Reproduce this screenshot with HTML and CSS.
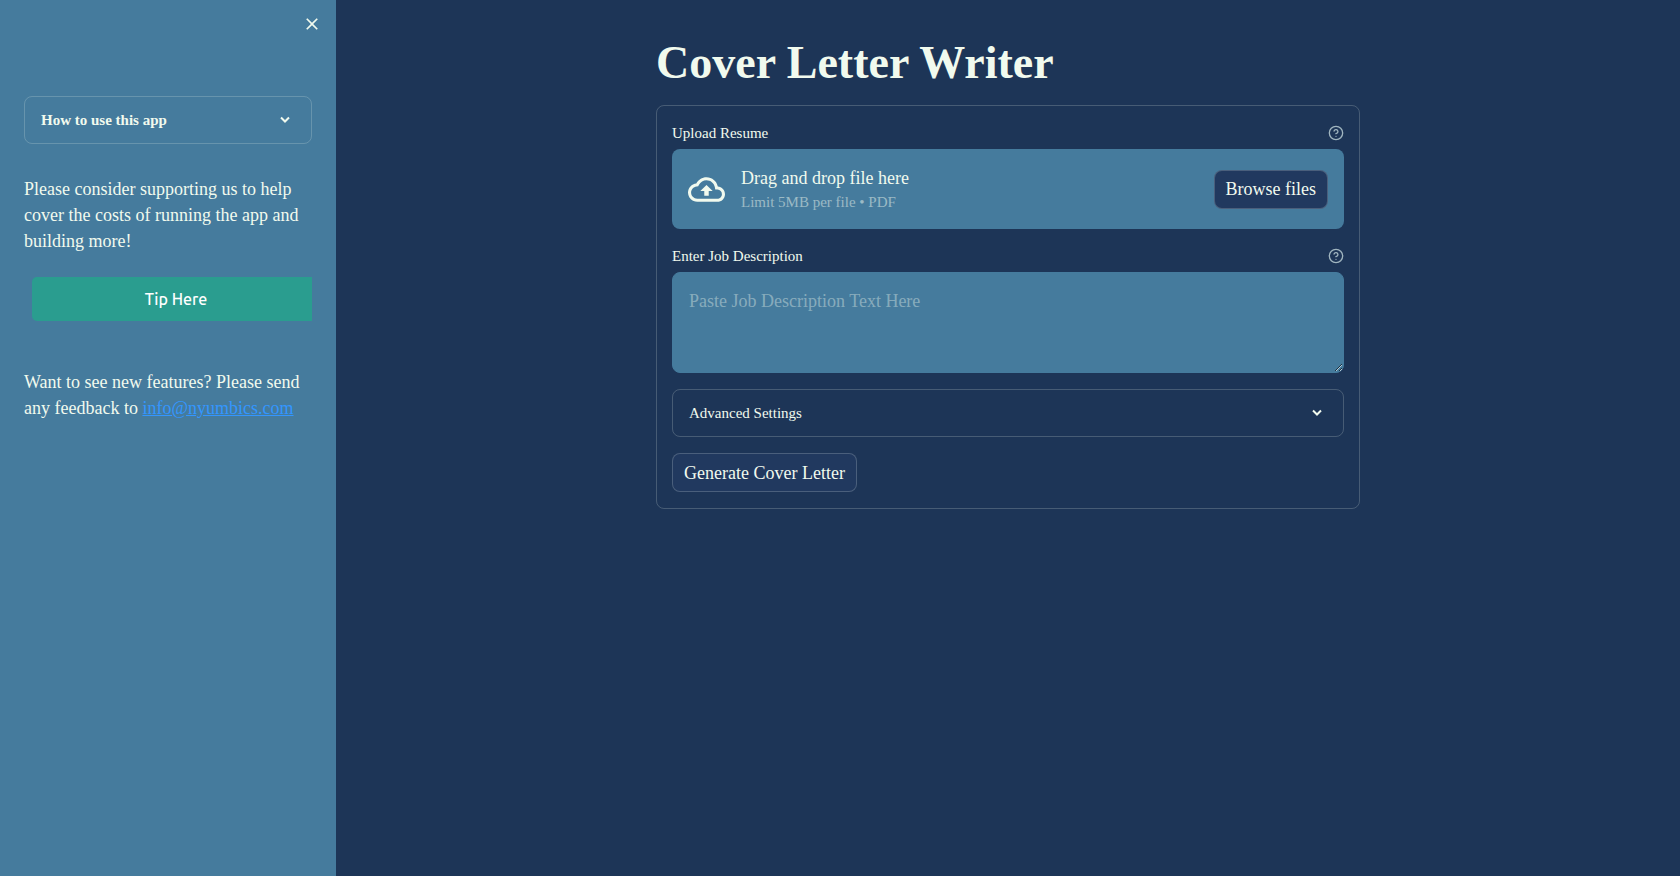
FILE: index.html
```html
<!DOCTYPE html>
<html lang="en">
<head>
    <meta charset="UTF-8">
    <meta name="viewport" content="width=device-width, initial-scale=1.0">
    <title>Cover Letter Writer</title>
    <link rel="stylesheet" href="styles.css">
</head>
<body>
    <aside class="sidebar">
        <div class="sidebar-top">
            <button class="close" type="button" aria-label="Close sidebar">
                <svg viewBox="0 0 24 24" width="20" height="20"><path d="M19 6.41L17.59 5 12 10.59 6.41 5 5 6.41 10.59 12 5 17.59 6.41 19 12 13.41 17.59 19 19 17.59 13.41 12z"/></svg>
            </button>
        </div>
        <details class="expander expander-bold">
            <summary>
                <span>How to use this app</span>
                <svg class="chevron" viewBox="0 0 12 12" width="12" height="12"><path d="M2 3.500l4 4 4-4"/></svg>
            </summary>
        </details>
        <p class="support">Please consider supporting us to help cover the costs of running the app and building more!</p>
        <a class="tip" href="#">Tip Here</a>
        <p class="feedback">Want to see new features? Please send any feedback to <a href="mailto:info@nyumbics.com">info@nyumbics.com</a></p>
    </aside>

    <main class="main">
        <div class="content">
            <h1>Cover Letter Writer</h1>
            <form class="form">
                <div class="field">
                    <div class="field-label">
                        <label for="resume">Upload Resume</label>
                        <svg class="help" viewBox="0 0 24 24" width="16" height="16"><circle cx="12" cy="12" r="10"/><path d="M9.090 9a3 3 0 0 1 5.830 1c0 2-3 3-3 3M12 17h.01"/></svg>
                    </div>
                    <div class="dropzone">
                        <svg class="cloud" viewBox="0 0 24 24" width="37" height="37"><path d="M19.350 10.040C18.670 6.590 15.640 4 12 4 9.110 4 6.600 5.640 5.350 8.040 2.340 8.360 0 10.910 0 14c0 3.310 2.690 6 6 6h13c2.760 0 5-2.240 5-5 0-2.640-2.050-4.780-4.650-4.960zM19 18H6c-2.210 0-4-1.790-4-4 0-2.050 1.530-3.760 3.560-3.970l1.070-.11.5-.95C8.080 7.140 9.940 6 12 6c2.620 0 4.880 1.860 5.390 4.430l.3 1.500 1.530.11c1.560.1 2.780 1.410 2.780 2.960 0 1.650-1.350 3-3 3zM8 13h2.550v3h2.900v-3H16l-4-4z"/></svg>
                        <div class="dropzone-text">
                            <span>Drag and drop file here</span>
                            <small>Limit 5MB per file • PDF</small>
                        </div>
                        <input type="file" id="resume" accept=".pdf" hidden>
                        <button class="button" id="browse" type="button">Browse files</button>
                    </div>
                </div>

                <div class="field">
                    <div class="field-label">
                        <label for="job">Enter Job Description</label>
                        <svg class="help" viewBox="0 0 24 24" width="16" height="16"><circle cx="12" cy="12" r="10"/><path d="M9.090 9a3 3 0 0 1 5.830 1c0 2-3 3-3 3M12 17h.01"/></svg>
                    </div>
                    <textarea id="job" placeholder="Paste Job Description Text Here"></textarea>
                </div>

                <details class="expander">
                    <summary>
                        <span>Advanced Settings</span>
                        <svg class="chevron" viewBox="0 0 12 12" width="12" height="12"><path d="M2 3.500l4 4 4-4"/></svg>
                    </summary>
                </details>

                <button class="button" type="submit">Generate Cover Letter</button>
            </form>
        </div>
    </main>

    <script>
        document.getElementById('browse').addEventListener('click', () => {
            document.getElementById('resume').click();
        });
    </script>
</body>
</html>
```

FILE: styles.css
```css
* {
    box-sizing: border-box;
}

body {
    margin: 0;
    min-height: 100vh;
    display: flex;
    background-color: #1d3557;
    color: #f1faee;
    font-family: "Source Serif Pro", "Liberation Serif", serif;
    font-size: 18px;
    line-height: 26px;
}

svg {
    fill: currentColor;
    flex-shrink: 0;
}

.sidebar {
    width: 336px;
    flex-shrink: 0;
    padding: 0 24px;
    background-color: #457b9d;
}

.sidebar-top {
    display: flex;
    justify-content: flex-end;
    height: 96px;
    padding-top: 14px;
    margin-right: -10px;
}

.close {
    width: 20px;
    height: 20px;
    padding: 0;
    border: 0;
    background: none;
    color: inherit;
    cursor: pointer;
}

.close svg {
    display: block;
}

.expander {
    border: 1px solid rgba(241, 250, 238, 0.2);
    border-radius: 8px;
    font-size: 15px;
}

.expander summary {
    display: flex;
    justify-content: space-between;
    align-items: center;
    height: 46px;
    padding: 0 20px 0 16px;
    list-style: none;
    cursor: pointer;
}

.expander-bold {
    font-weight: bold;
}

.chevron {
    fill: none;
    stroke: currentColor;
    stroke-width: 2;
}

.sidebar p {
    margin: 0;
}

.sidebar .support {
    margin-top: 32px;
}

.sidebar .feedback {
    margin-top: 48px;
}

.feedback a {
    color: #3396ff;
}

.tip {
    display: block;
    margin: 23px 0 0 8px;
    padding-left: 8px;
    border-radius: 5px 0 0 5px;
    background-color: #2a9d8f;
    color: #fff;
    font-family: Ubuntu, "Noto Sans", sans-serif;
    font-size: 16px;
    font-weight: 500;
    line-height: 44px;
    text-align: center;
    text-decoration: none;
}

.main {
    flex: 1;
    padding: 36px 16px;
}

.content {
    max-width: 704px;
    margin: 0 auto;
}

h1 {
    margin: 0 0 16px;
    font-size: 46px;
    line-height: 53px;
}

.form {
    display: flex;
    flex-direction: column;
    align-items: stretch;
    gap: 16px;
    padding: 16px 15px;
    border: 1px solid rgba(241, 250, 238, 0.2);
    border-radius: 8px;
}

.field-label {
    display: flex;
    justify-content: space-between;
    align-items: center;
    height: 22px;
    margin-bottom: 5px;
    font-size: 15px;
}

.help {
    fill: none;
    stroke: #a0b5bf;
    stroke-width: 2;
    stroke-linecap: round;
    stroke-linejoin: round;
}

.dropzone {
    display: flex;
    align-items: center;
    gap: 16px;
    height: 80px;
    padding: 0 16px;
    border-radius: 8px;
    background-color: #457b9d;
}

.dropzone-text {
    display: flex;
    flex-direction: column;
    flex: 1;
}

.dropzone-text small {
    color: rgba(241, 250, 238, 0.5);
    font-size: 15px;
    line-height: 23px;
}

.button {
    align-self: flex-start;
    height: 39px;
    padding: 0 11px;
    border: 1px solid rgba(241, 250, 238, 0.2);
    border-radius: 8px;
    background-color: #21395f;
    color: inherit;
    font: inherit;
    cursor: pointer;
}

.dropzone .button {
    align-self: center;
}

textarea {
    display: block;
    width: 100%;
    height: 101px;
    padding: 15px 16px;
    border: 1px solid #457b9d;
    border-radius: 8px;
    background-color: #457b9d;
    color: inherit;
    font: inherit;
    resize: vertical;
}

textarea::placeholder {
    color: rgba(241, 250, 238, 0.4);
}
```
